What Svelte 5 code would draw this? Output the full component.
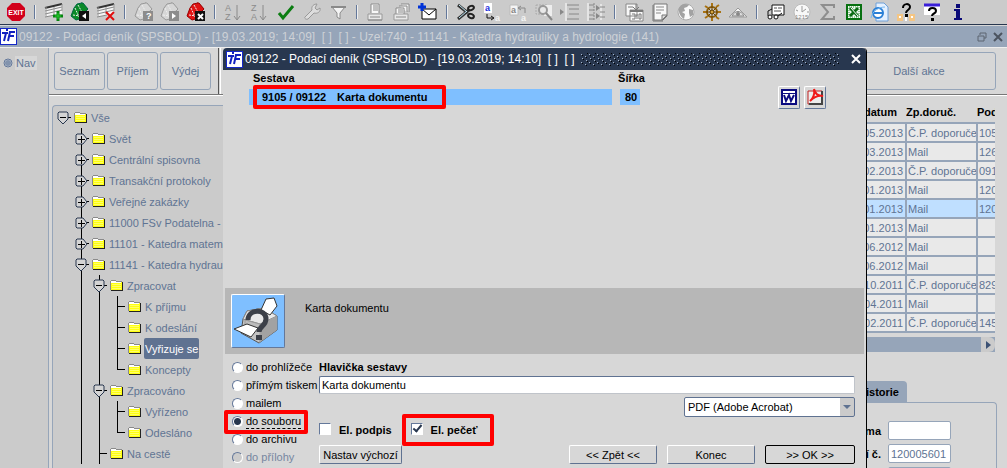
<script>
  const sheets = (c, edge, badge, mark) => `
    <path d="M1 14 4 6l3-4 5-1 5 6-4 9-7 2z" fill="${c}" stroke="${edge}"/>
    <path d="M5 6l4 9M8 3l5 9M3 13l7 1" stroke="#eee" fill="none" stroke-dasharray="2 1"/>
    <path d="M11 1l2 0 5 6-2 2" fill="${c}" stroke="${edge}"/>
    <path d="M9 9h10v10H9z" fill="${badge}"/>${mark}`;
  const table = (mark) => `
    <path d="M1 6 18 2v10L1 15z" fill="#f4f4f4"/>
    <path d="M1 6 18 2" stroke="#333" stroke-width="2" fill="none"/>
    <path d="M1 9l17-4M1 12l17-4M1 15l10-2" stroke="#888" fill="none"/>
    <path d="M2 5v10M18 2v7M10 5v7" stroke="#999" fill="none"/>${mark}`;
  const sort = (a, b) => `
    <text x="1" y="9" font-size="9" fill="#8a8a8a">${a}</text><text x="1" y="18" font-size="9" fill="#8a8a8a">${b}</text>
    <path d="M13 3v14M10 14l3 4 3-4" stroke="#8a8a8a" fill="none" stroke-width="1"/>`;
  const printer = `<path d="M5 11V2h8v9" fill="#f8f8f8" stroke="#8a8a8a"/><path d="M7 4h5M7 6h5M7 8h5" stroke="#888"/>
    <path d="M2 12h14v6H2z" fill="#e8e8e8" stroke="#999"/><path d="M4 15h10M2 18h14" stroke="#888"/>`;

  const groups = [
    [['Konec', `<path d="M6 1h8l5 5v8l-5 5H6l-5-5V6z" fill="#d2001a"/><text x="10" y="13" font-size="7" font-weight="700" fill="#fff" text-anchor="middle">EXIT</text>`]],
    [
      ['Nový řádek', table('<path d="M14 9v10M9 14h10" stroke="#05840f" stroke-width="3"/><path d="M14 11v6M11 14h6" stroke="#28d030"/>')],
      ['Duplikovat', sheets('#0a8a28', '#064', '#111', '<path d="M16 11v6l-4-3z" fill="#fff"/>')],
      ['Smazat řádek', table('<path d="M10 10l8 8M18 10l-8 8" stroke="#e00d0d" stroke-width="2"/>')],
    ],
    [
      ['Zadat dotaz', sheets('#d6d6d6', '#999', '#8c8c8c', '<text x="12" y="17" font-size="9" font-weight="700" fill="#fff">?</text>')],
      ['Provést dotaz', sheets('#d6d6d6', '#999', '#8c8c8c', '<path d="M12 11v6l4-3z" fill="#fff"/>')],
      ['Zrušit dotaz', sheets('#e01212', '#900', '#111', '<path d="M12 12l5 5M17 12l-5 5" stroke="#fff" stroke-width="2"/>')],
    ],
    [
      ['Seřadit vzestupně', sort('A', 'Z')],
      ['Seřadit sestupně', sort('Z', 'A')],
      ['Potvrdit', '<path d="M3 11l4 5L17 4" fill="none" stroke="#0b7d12" stroke-width="3"/>'],
      ['Nastavení', '<path d="M3 15l7-7c-1-4 2-6 5-6l-2 4 2 2 3-2c1 4-3 6-6 5l-6 6c-2 1-4-1-3-2z" fill="#ddd" stroke="#999"/>'],
      ['Filtr', '<path d="M4 5h13l-5 6v6l-3-2v-4z" fill="#f4f4f4" stroke="#8a8a8a"/><path d="M3 5h15" stroke="#8a8a8a" stroke-width="2"/>'],
    ],
    [
      ['Tisk', printer],
      ['Tisk více', `<path d="M9 2h8v8M7 4h8v6" fill="#f4f4f4" stroke="#888"/><path d="M4 12V6h8v6" fill="#f8f8f8" stroke="#888"/><path d="M6 8h5M6 10h5" stroke="#888"/><path d="M2 12h14v6H2z" fill="#e8e8e8" stroke="#999"/><path d="M4 15h10" stroke="#888"/>`],
      ['Nová zpráva', '<path d="M4 7h14v10H4z" fill="#fff" stroke="#000"/><path d="M4 7l7 6 7-6" fill="none" stroke="#000"/><path d="M4 1v8M0 5h8" stroke="#0033d8" stroke-width="3"/>'],
    ],
    [
      ['Vyjmout', '<path d="M2 3l10 8M2 17L13 8" stroke="#333" stroke-width="3"/><path d="M3 3l8 7M3 16l8-7" stroke="#bfe6f5"/><ellipse cx="15" cy="6" rx="3" ry="2" fill="none" stroke="#222" stroke-width="2" transform="rotate(-25 15 6)"/><ellipse cx="15" cy="14" rx="3" ry="2" fill="none" stroke="#222" stroke-width="2" transform="rotate(25 15 14)"/>'],
      ['Kopírovat', '<path d="M2 1h8v10H2z" fill="#fff"/><text x="3" y="9" font-size="9" font-weight="700" fill="#1a2fe0">a</text><path d="M5 12v4h6M9 14l3 2-3 2" stroke="#111" fill="none"/><text x="13" y="19" font-size="9" font-weight="700" fill="#f4f4f4">a</text>'],
      ['Vložit', '<path d="M2 3h8v10H2z" fill="#f4f4f4" stroke="#bbb"/><text x="3" y="11" font-size="9" font-weight="700" fill="#888">a</text><path d="M17 11V6h-6M13 4l-3 2 3 2" stroke="#888" fill="none"/><text x="13" y="19" font-size="9" font-weight="700" fill="#f4f4f4">a</text>'],
      ['Hledat', '<path d="M2 3h11v9H2z" fill="#ccc" stroke="#aaa" stroke-dasharray="2 1"/><path d="M10 3h8v11h-8z" fill="#eee"/><circle cx="9" cy="8" r="4" fill="#e8e8e8" stroke="#999" stroke-width="2"/><path d="M12 11l6 7" stroke="#888" stroke-width="2"/>'],
      ['Vložit úroveň', '<path d="M6 1v18" stroke="#fff"/><path d="M7 3h12M9 7h10M9 12h10M7 17h12" stroke="#888" stroke-width="1"/><path d="M0 7l4 3-4 3z" fill="#888"/>'],
      ['Spojit úrovně', '<path d="M2 1v18M15 2v16" stroke="#fff"/><path d="M3 3h5M3 8h5M3 13h5M3 17h5M14 5h5M14 10h5M14 15h5" stroke="#888"/><path d="M8 1v18" stroke="#888" stroke-dasharray="2 1"/><path d="M10 3l4 3-4 3zM10 11l4 3-4 3z" fill="#888"/>'],
    ],
    [
      ['Šablony', '<path d="M2 2h11v12H2zM6 8h13v11H6z" fill="#f8f8f8" stroke="#888"/><path d="M6 9h13" stroke="#777" stroke-width="2"/><path d="M4 5h5M8 12h3v5H8M13 12v5M15 12h2v5h-2z" stroke="#777" fill="none"/><path d="M12 2v6M9 5l3 3 3-3" stroke="#777" fill="none"/>'],
      ['Poznámka', '<path d="M4 2h13v12l-4 4H4z" fill="#f8f8f8" stroke="#777"/><path d="M6 5h8M6 8h8M6 11h5" stroke="#888"/><path d="M12 18v-5h5z" fill="#ddd" stroke="#777"/><path d="M3 3v16h10" stroke="#777" fill="none"/>'],
      ['Web', '<circle cx="10" cy="10" r="8" fill="#fafafa" stroke="#aaa"/><path d="M3 6c2-4 6-5 10-3l-2 2-3 1 1 3-3 1 3 2-1 5c-3-2-6-6-5-11zM13 7l4 1v5l-3 2-1-4z" fill="#a2a2a2"/>'],
      ['Navigace', '<circle cx="10" cy="10" r="5" fill="none" stroke="#8a5c08" stroke-width="2"/><path d="M10 1v18M1 10h18M4 4l12 12M16 4L4 16" stroke="#6f4700" stroke-width="1"/><path d="M10 1v3M10 16v3M1 10h3M16 10h3M3 4l3 2M14 15l3 2M3 16l3-2M14 5l3-2" stroke="#a87315" stroke-width="2"/><circle cx="10" cy="10" r="2" fill="#d5a540" stroke="#5a3a00"/>'],
      ['Náhled', '<path d="M1 15L10 6l9 9z" fill="#f4f4f4" stroke="#999"/><path d="M4 14c3-6 9-6 12 0z" fill="#ddd" stroke="#888"/><circle cx="10" cy="12" r="2" fill="#888"/>'],
    ],
    [
      ['Formulář', '<path d="M6 3h12v10H6z" fill="#fff" stroke="#111"/><path d="M8 6h3M12 6h4M8 9h7" stroke="#555"/><circle cx="4" cy="15" r="2" fill="#fff" stroke="#111"/><circle cx="10" cy="15" r="2" fill="#fff" stroke="#111"/><path d="M2 14V9l4-2M12 14l4-3" stroke="#111" fill="none"/>'],
      ['Čas', '<circle cx="10" cy="10" r="8" fill="#f8f8f8" stroke="#bbb"/><path d="M10 4v6l4-3M4 8l2 1M15 10h2" stroke="#999" fill="none"/><text x="3" y="17" font-size="6" fill="#888">1215</text>'],
      ['Součet', '<path d="M16 6V3H4l6 7-6 7h12v-3" fill="none" stroke="#8e8e8e" stroke-width="2"/>'],
      ['Excel', '<path d="M3 3h14v14H3z" fill="#f0f8f0" stroke="#087010" stroke-width="2"/><path d="M5 5h10v10H5z" fill="none" stroke="#3a9a42" stroke-dasharray="1 1"/><path d="M6 6l8 8M14 6l-8 8" stroke="#0a6b12" stroke-width="3"/><path d="M7 6l7 8" stroke="#fff"/>'],
      ['Internet', '<path d="M6 1h8l4 4v14H6z" fill="#e4f0ff" stroke="#6ea0d8"/><circle cx="8" cy="11" r="5" fill="#fff" stroke="#2a7fd6" stroke-width="2"/><path d="M4 11h8" stroke="#2a7fd6" stroke-width="2"/><path d="M1 16C2 9 9 5 15 5" fill="none" stroke="#74b7f0"/>'],
      ['Nápověda k poli', '<path d="M1 12h6v7H1zM13 12h6v7h-6z" fill="#f4c583"/><path d="M3 15h2M15 15h2M10 15v4" stroke="#fff" stroke-width="2"/><path d="M7 6c0-5 7-5 7-1 0 3-4 3-4 6" fill="none" stroke="#000" stroke-width="2"/><path d="M9 12h3v3H9z"/>'],
      ['Nápověda', '<path d="M2 2h16v11H2z" fill="#fff"/><path d="M2 3h16" stroke="#3a1fd8" stroke-width="3"/><path d="M7 9c0-4 7-4 7 0 0 3-4 2-4 5" fill="none" stroke="#000" stroke-width="2"/><path d="M9 16h3v3H9z"/>'],
      ['Informace', '<path d="M8 2h4v4H8zM6 7h6v9h2v2H6v-2h2V9H6z" fill="#0a0a78"/>'],
    ],
  ];

  const tree = [
    { level: 0, text: 'Vše', node: 'open' },
    { level: 1, text: 'Svět', node: 'closed' },
    { level: 1, text: 'Centrální spisovna', node: 'closed' },
    { level: 1, text: 'Transakční protokoly', node: 'closed' },
    { level: 1, text: 'Veřejné zakázky', node: 'closed' },
    { level: 1, text: '11000 FSv Podatelna - F', node: 'closed' },
    { level: 1, text: '11101 - Katedra matema', node: 'closed' },
    { level: 1, text: '11141 - Katedra hydrau', node: 'open' },
    { level: 2, text: 'Zpracovat', node: 'open' },
    { level: 3, text: 'K příjmu' },
    { level: 3, text: 'K odeslání' },
    { level: 3, text: 'Vyřizuje se', selected: true },
    { level: 3, text: 'Koncepty', last: true },
    { level: 2, text: 'Zpracováno', node: 'open' },
    { level: 3, text: 'Vyřízeno' },
    { level: 3, text: 'Odesláno', last: true },
    { level: 2, text: 'Na cestě' },
  ];

  const rows = [
    ['05.2013', 'Č.P. doporuče', '105'],
    ['03.2013', 'Mail', '126'],
    ['02.2013', 'Č.P. doporuče', '091'],
    ['01.2013', 'Mail', '120'],
    ['01.2013', 'Mail', '120'],
    ['01.2013', 'Mail', ''],
    ['06.2012', 'Mail', ''],
    ['06.2012', 'Mail', ''],
    ['10.2011', 'Č.P. doporuče', '829'],
    ['04.2011', 'Mail', ''],
    ['02.2011', 'Č.P. doporuče', '145'],
  ];

  const targets = ['do prohlížeče', 'přímým tiskem', 'mailem', 'do souboru', 'do archivu', 'do přílohy'];
  let target = $state('do souboru');
  let heading = $state('Karta dokumentu');
  let sign = $state(false);
  let seal = $state(true);
</script>

{#snippet logo()}
  <svg class="logo" width="17" height="17" viewBox="0 0 17 17" aria-hidden="true">
    <path d="M0 0h17v17H0z" fill="#1428c8" /><path d="M1 1h15v15H1z" fill="#fff" />
    <path d="M2 5h6M6 5 4 13M9 4h6M10 4 8 13M9 8h5" stroke="#1020c0" stroke-width="2" fill="none" />
    <path d="M6 2h2" stroke="#1020c0" stroke-width="2" />
  </svg>
{/snippet}

<div class="app">
  <header class="toolbar">
    {#each groups as group, g}
      {#if g > 0}<span class="sep"></span>{/if}
      {#each group as [name, art]}
        <button class="tool" aria-label={name}>
          <svg width="20" height="20" viewBox="0 0 20 20" fill="#000">{@html art}</svg>
        </button>
      {/each}
    {/each}
  </header>

  <div class="titlebar">
    {@render logo()}
    <span class="caption">09122 - Podací deník (SPSBOLD) - [19.03.2019; 14:09]  [ ]  [ ] - Uzel:740 - 11141 - Katedra hydrauliky a hydrologie (141)</span>
    <button class="win" aria-label="Obnovit okno">
      <svg width="10" height="10" viewBox="0 0 10 10"><path d="M3 3V1h6v5H7M1 4h6v5H1z" fill="none" stroke="#5c6470" stroke-width="1" /></svg>
    </button>
    <button class="win" aria-label="Zavřít okno">
      <svg width="10" height="10" viewBox="0 0 10 10"><path d="M1 1l8 8M9 1 1 9" stroke="#4c5460" stroke-width="2" /></svg>
    </button>
  </div>

  <div class="body">
    <nav class="side">
      <button class="nav">
        <svg width="11" height="11" viewBox="0 0 11 11"><circle cx="5" cy="5" r="4" fill="#c8ced6" stroke="#64789a" /><circle cx="5" cy="5" r="3" fill="#8293ad" /></svg>
        <span>Nav</span>
      </button>
    </nav>

    <main class="work">
      <div class="actions">
        <button>Seznam</button>
        <button>Příjem</button>
        <button>Výdej</button>
        <span class="rule"></span>
        <button class="more">Další akce</button>
      </div>

      <div class="columns">
        <ul class="tree">
          {#each tree as item}
            <li>
              {#if item.level > 0}<span class="cell"></span>{/if}
              {#each Array(Math.max(item.level - 1, 0)) as _}
                <span class="cell line"></span>
              {/each}
              <span class="cell branch" class:line={item.level > 0} class:last={item.last}>
                {#if item.node}
                  <svg width="14" height="14" viewBox="0 0 14 14" aria-hidden="true">
                    {#if item.node === 'open'}
                      <path d="M3 1h8l1 1v6l-5 5-5-5V2z" fill="#d4d4d4" stroke="#28374f" /><path d="M4 6h6v1H4z" />
                    {:else}
                      <path d="M3 2h6l4 5-4 5H3l-1-1V3z" fill="#d4d4d4" stroke="#28374f" /><path d="M4 7h7v1H4zM7 4h1v7H7z" />
                    {/if}
                  </svg>
                {/if}
              </span>
              <svg class="folder" width="14" height="12" viewBox="0 0 14 12" shape-rendering="crispEdges" aria-hidden="true">
                <path d="M1 2h12v9H1z" fill="#222" />
                <path d="M0 1h1V0h5v1h6v9H0z" fill="#8a8a8a" />
                <path d="M1 1h5v1H1z" fill="#fff" />
                <path d="M1 2h11v8H1z" fill="#ffff10" /><path d="M1 2h10v1H1z" fill="#fff" />
                <path d="M2 4h9v1H2zM2 6h9v1H2zM2 8h9v1H2z" fill="#ffff6a" />
              </svg>
              <button class="label" class:selected={item.selected}>{item.text}</button>
            </li>
          {/each}
        </ul>

        <section class="records">
          <div class="grid">
            <table>
              <thead><tr><th class="date">datum</th><th class="way">Zp.doruč.</th><th>Pod</th></tr></thead>
              <tbody>
                {#each rows as row, r}
                  <tr class:current={r === 4}>
                    <td class="date">{row[0]}</td><td>{row[1]}</td><td>{row[2]}</td>
                  </tr>
                {/each}
              </tbody>
            </table>
            <div class="scroll"><button aria-label="Posunout vpravo"><svg width="14" height="14" viewBox="0 0 14 14"><path d="M5 3v8l5-4z" fill="#3c5174" /></svg></button></div>
          </div>
          <div class="tabs"><button>Historie</button></div>
          <div class="detail">
            <label>Forma<input value="" /></label>
            <label>Podací č.<input value="120005601" /></label>
            <label><input value="" aria-label="Poznámka" /></label>
          </div>
        </section>
      </div>
    </main>
  </div>

  <div class="dialog" role="dialog" aria-labelledby="dialog-title">
    <div class="dialog-bar">
      {@render logo()}
      <span id="dialog-title" class="caption">09122 - Podací deník (SPSBOLD) - [19.03.2019; 14:10]  [ ]  [ ]</span>
      <svg class="grip" height="13" aria-hidden="true">
        <defs>
          <pattern id="grip" width="8" height="8" patternUnits="userSpaceOnUse" shape-rendering="crispEdges">
            <path d="M0 1h1v1H0zM4 3h1v1H4zM1 5h1v1H1zM5 7h1v1H5z" fill="#a9b8cc" /><path d="M1 2h1v1H1zM5 4h1v1H5zM2 6h1v1H2zM6 0h1v1H6z" fill="#000" />
          </pattern>
        </defs>
        <rect width="100%" height="13" fill="url(#grip)" />
      </svg>
      <button class="win" aria-label="Zavřít">
        <svg width="10" height="10" viewBox="0 0 10 10"><path d="M1 1l8 8M9 1 1 9" stroke="#fff" stroke-width="2" /></svg>
      </button>
    </div>

    <div class="reports">
      <div class="head"><b>Sestava</b><b class="width">Šířka</b></div>
      <div class="report">
        <div class="pick marked"><b class="code">9105 / 09122</b><b class="name">Karta dokumentu</b></div>
        <b class="size">80</b>
        <button class="export" aria-label="Word">
          <svg width="18" height="18" viewBox="0 0 18 18"><path d="M1 1h16v16H1z" fill="#0a0a80" /><path d="M3 3h12v2H3zM3 6h12v9H3z" fill="#fff" /><path d="M4 7l2 6 3-6 2 6 3-6" fill="none" stroke="#0a0a80" stroke-width="2" /></svg>
        </button>
        <button class="export" aria-label="PDF">
          <svg width="18" height="18" viewBox="0 0 18 18"><path d="M2 3h14v13H2z" fill="#ececec" stroke="#c02020" /><path d="M16 3v13H3" stroke="#444" fill="none" stroke-width="2" /><path d="M4 13c3-2 5-7 4-12 1 5 4 7 9 7-5-1-9 1-13 5z" fill="none" stroke="#f01818" stroke-width="2" /></svg>
        </button>
      </div>
    </div>

    <div class="about">
      <div class="picture">
        <svg width="50" height="50" viewBox="0 0 50 50" aria-hidden="true">
          <path d="M10 23 14 15 31 12 44 20v14L26 47 8 37z" fill="#c4c4c4" stroke="#555" />
          <path d="M14 15 31 12 44 20 27 28 10 23z" fill="#e8e8e8" stroke="#888" />
          <path d="M27 28 44 20v14L26 47z" fill="#a2a2a2" />
          <path d="M12 24 27 28v5L12 29z" fill="#bcbcbc" stroke="#999" />
          <path d="M28 14 33 3l8-1 3 8-7 9z" fill="#fff" stroke="#333" />
          <path d="M1 33 14 28l11 4-7 9z" fill="#fff" stroke="#333" />
          <path d="M15 24c0-11 18-12 18-1 0 7-7 7-7 13" fill="none" stroke="#3c4048" stroke-width="5" />
          <path d="M23 39h6v5h-6z" fill="#3c4048" />
        </svg>
      </div>
      <span>Karta dokumentu</span>
    </div>

    <div class="options">
      <fieldset class="targets">
        {#each targets as t}
          <label class:marked={t === 'do souboru'} class:off={t === 'do přílohy'}>
            <input type="radio" name="target" value={t} bind:group={target} disabled={t === 'do přílohy'} />
            <span>{t}</span>
          </label>
        {/each}
      </fieldset>
      <div class="fields">
        <label class="title" for="heading">Hlavička sestavy</label>
        <input id="heading" class="text" bind:value={heading} />
        <div class="format">
          <select aria-label="Formát"><option>PDF (Adobe Acrobat)</option></select>
        </div>
        <div class="checks">
          <label><input type="checkbox" bind:checked={sign} />El. podpis</label>
          <label class="marked"><input type="checkbox" bind:checked={seal} />El. pečeť</label>
        </div>
        <div class="buttons">
          <button class="reset">Nastav výchozí</button>
          <button>&lt;&lt; Zpět &lt;&lt;</button>
          <button>Konec</button>
          <button class="ok">&gt;&gt; OK &gt;&gt;</button>
        </div>
      </div>
    </div>
  </div>
</div>

<style>
  :global(body) { margin: 0; }
  .app {
    position: relative; height: 100vh; overflow: hidden; display: flex; flex-direction: column;
    background: #d7d7d7; color: #000; font: 11px/14px "Liberation Sans", Arial, sans-serif;
  }
  .app :global(*), .app :global(*::before), .app :global(*::after) { box-sizing: border-box; }
  button, input, select { font: inherit; color: inherit; margin: 0; padding: 0; }
  button { background: none; border: 0; white-space: nowrap; }
  svg { display: block; flex: none; }

  .toolbar { flex: none; display: flex; align-items: center; height: 25px; padding-left: 3px; background: #cbcbcb; border-bottom: 1px solid #28374f; }
  .tool { width: 26px; height: 24px; flex: none; display: grid; place-items: center; }
  .tool svg { overflow: visible; }
  .sep { flex: none; width: 2px; height: 14px; margin: 0 5px; background: #64789a; border-right: 1px solid #eee; }

  .titlebar { flex: none; display: flex; align-items: center; height: 22px; margin-top: 1px; padding-right: 2px; gap: 2px; background: #96a5b9; border-bottom: 1px solid #eee; color: #cdd1d6; }
  .caption { flex: none; white-space: pre; font-size: 12px; line-height: 16px; }
  .win { width: 14px; height: 14px; display: grid; place-items: center; }
  .titlebar .caption { flex: 1; min-width: 0; overflow: hidden; }

  .body { flex: 1; min-height: 0; display: flex; }
  .side { flex: none; width: 49px; padding: 8px 0 0 3px; background: #cbcbcb; border-right: 1px solid #96a5b9; }
  .nav { display: flex; align-items: center; gap: 1px; color: #607493; }
  .nav span { padding: 0 1px; background: #d7d7d7; }

  .work { flex: 1; min-width: 0; display: flex; flex-direction: column; }
  .actions { flex: none; display: flex; gap: 2px; height: 47px; padding: 4px 11px 4px 5px; border-bottom: 1px solid #777; box-shadow: 0 1px #fff; color: #607493; }
  .actions button { width: 51px; height: 38px; border: 1px solid #96a5b9; border-radius: 3px; }
  .actions .rule { width: 3px; margin: -4px 0 -4px 5px; border-left: 1px solid #555; border-right: 1px solid #fff; }
  .actions .more { width: 154px; margin-left: auto; }

  .columns { flex: 1; min-height: 0; display: flex; justify-content: space-between; padding: 10px 10px 0 3px; }
  .tree { width: 171px; margin: 0; padding: 1px 0 0 1px; overflow: hidden; list-style: none; background: #cbcbcb; border: 1px solid #96a5b9; border-width: 1px 0 0 1px; border-radius: 4px 0 0 0; }
  .tree li { display: flex; align-items: center; height: 21px; color: #607493; }
  .cell { position: relative; flex: none; width: 18px; height: 21px; display: flex; align-items: center; padding-left: 2px; }
  .cell svg { position: relative; }
  .line::before { content: ""; position: absolute; left: 9px; top: 0; bottom: 0; border-left: 1px solid #000; }
  .line.last::before { bottom: 10px; }
  .branch::after { content: ""; position: absolute; left: 9px; right: 1px; top: 10px; border-top: 1px solid #000; }
  .branch svg { z-index: 1; }
  .folder { margin: 0 2px; }
  .label { height: 21px; padding: 0 1px; border-radius: 2px; }
  .selected { background: #5f7291; color: #fff; }

  .records { width: 146px; min-width: 0; padding-right: 2px; }
  .grid { overflow: hidden; }
  table { width: 100%; table-layout: fixed; border-collapse: collapse; color: #607493; }
  th { height: 17px; padding: 0 0 3px; text-align: left; font-weight: 700; line-height: 14px; color: #000; overflow: hidden; white-space: nowrap; }
  th.date { width: 54px; padding-right: 9px; text-align: right; }
  th.way { width: 71px; }
  td { height: 19px; padding: 0 0 0 1px; overflow: hidden; white-space: nowrap; background: #e9e9e9; border: 2px solid #96a5b9; }
  td:last-child { border-right: 0; }
  td.date { text-align: right; padding-right: 2px; }
  tr.current td { background: #bfdfff; }
  .scroll { display: flex; justify-content: flex-end; height: 15px; margin-top: 4px; background: #96a5b9; }
  .scroll button { width: 14px; background: #cbcbcb; border-radius: 0 6px 6px 0; }
  .tabs { display: flex; margin-top: 29px; }
  .tabs button { width: 56px; height: 21px; text-align: right; padding-right: 8px; font-weight: 700; background: #96a5b9; border-radius: 0 4px 0 0; }
  .detail { display: grid; grid-template-columns: minmax(0, 1fr); gap: 4px; margin-right: -2px; padding: 18px 45px 0 0; border: 1px solid #96a5b9; border-width: 1px 1px 0 0; border-radius: 0 4px 0 0; font-weight: 700; }
  .detail label { display: flex; justify-content: flex-end; align-items: center; gap: 7px; height: 19px; white-space: nowrap; }
  .detail input { flex: none; width: 63px; height: 19px; padding: 0 2px; border: 1px solid #96a5b9; border-radius: 2px; background: #fff; color: #607493; font-weight: 400; outline: 0; }

  .dialog { position: absolute; left: 223px; right: 140px; top: 48px; bottom: 0; display: flex; flex-direction: column; background: #d7d7d7; border-right: 1px solid #000; border-radius: 4px 4px 0 0; }
  .dialog-bar { flex: none; display: flex; align-items: center; gap: 2px; height: 22px; padding: 0 3px; background: #28374f; border-radius: 4px 4px 0 0; color: #fff; }
  .grip { flex: 1; min-width: 0; margin: 0 8px 0 4px; }

  .reports { flex: 1; min-height: 0; padding: 1px 40px 0 26px; }
  .head, .report { display: flex; }
  .head { padding-left: 4px; }
  .head .width { margin-left: auto; padding-right: 181px; }
  .report { align-items: center; height: 24px; }
  .report b { line-height: 16px; }
  .pick { position: relative; flex: 1; display: flex; height: 16px; background: #7fbfff; }
  .code { width: 80px; padding-left: 13px; white-space: nowrap; }
  .name { padding-left: 8px; }
  .size { width: 20px; margin: 0 138px 0 8px; padding-left: 2px; text-align: center; background: #7fbfff; }
  .export { width: 22px; height: 23px; flex: none; display: grid; place-items: center; border: 1px solid #64789a; border-color: #fff #64789a #64789a #fff; border-radius: 2px; }
  .export + .export { margin-left: 4px; }

  .marked { position: relative; }
  .marked::after { content: ""; position: absolute; border: 4px solid #f00; border-radius: 2px; pointer-events: none; }
  .pick.marked::after { left: 4px; top: -4px; width: 193px; height: 24px; }
  .targets .marked::after { left: -8px; top: -2px; width: 84px; height: 24px; }
  .checks .marked::after { left: -9px; top: -9px; width: 92px; height: 32px; }

  .about { flex: none; display: flex; gap: 20px; height: 66px; margin: 0 2px; padding: 6px; background: #b7b7b7; }
  .about span { padding-top: 7px; }
  .picture { width: 54px; height: 54px; padding: 1px; background: #7fbfff; border: 1px solid #64789a; border-color: #fff #64789a #64789a #fff; border-radius: 2px; }

  .options { flex: none; display: flex; gap: 2px; height: 114px; padding: 4px 11px 0 9px; }
  .targets { flex: none; width: 85px; min-width: 0; margin: 0; padding: 0; border: 0; }
  .targets label { display: flex; align-items: center; gap: 3px; height: 18px; white-space: nowrap; }
  .targets .off { color: #7686a0; }
  input[type="radio"] { appearance: none; flex: none; width: 11px; height: 11px; border-radius: 50%; background: #fff; border: 1px solid #fff; border-color: #64789a #fff #fff #64789a; }
  input[type="radio"]:checked { background: radial-gradient(circle, #28374f 3px, #fff 4px); }
  input[type="radio"]:disabled { background: #cbcbcb; }
  .targets .marked span { border-bottom: 1px dashed #000; }
  .fields { flex: 1; min-width: 0; }
  .title { display: block; height: 18px; padding-top: 2px; font-weight: 700; }
  .text { display: block; width: 100%; height: 18px; padding: 0 2px; background: #fff; border: 1px solid #cbcbcb; border-color: #5f7291 #c0c4ca #c0c4ca #5f7291; border-radius: 2px; outline: 0; }
  .format { position: relative; display: flex; justify-content: flex-end; padding-top: 3px; }
  .format::after { content: ""; position: absolute; right: 4px; top: 11px; border: 4px solid transparent; border-top-color: #5f7291; border-bottom: 0; pointer-events: none; }
  select { width: 171px; height: 20px; padding: 0 3px; appearance: none; border: 1px solid #5f7291; border-radius: 2px; background: linear-gradient(#cbcbcb, #cbcbcb) right / 14px 100% no-repeat, #fff; }
  .checks { display: flex; gap: 19px; padding-top: 6px; font-weight: 700; }
  .checks label { display: flex; gap: 8px; white-space: nowrap; }
  input[type="checkbox"] { appearance: none; width: 12px; height: 12px; background: #fff; border: 1px solid #64789a; border-color: #64789a #fff #fff #64789a; }
  input[type="checkbox"]:checked::before { content: ""; display: block; width: 5px; height: 9px; margin: -1px 0 0 3px; border: solid #28374f; border-width: 0 2px 2px 0; transform: rotate(40deg); }
  .buttons { display: flex; gap: 10px; padding-top: 8px; }
  .buttons button { width: 88px; height: 19px; border: 1px solid #5f7291; border-color: #fff #5f7291 #5f7291 #fff; border-radius: 2px; }
  .buttons .reset { width: 83px; margin-right: auto; }
  .buttons .ok { width: 90px; border-color: #000; }
</style>
